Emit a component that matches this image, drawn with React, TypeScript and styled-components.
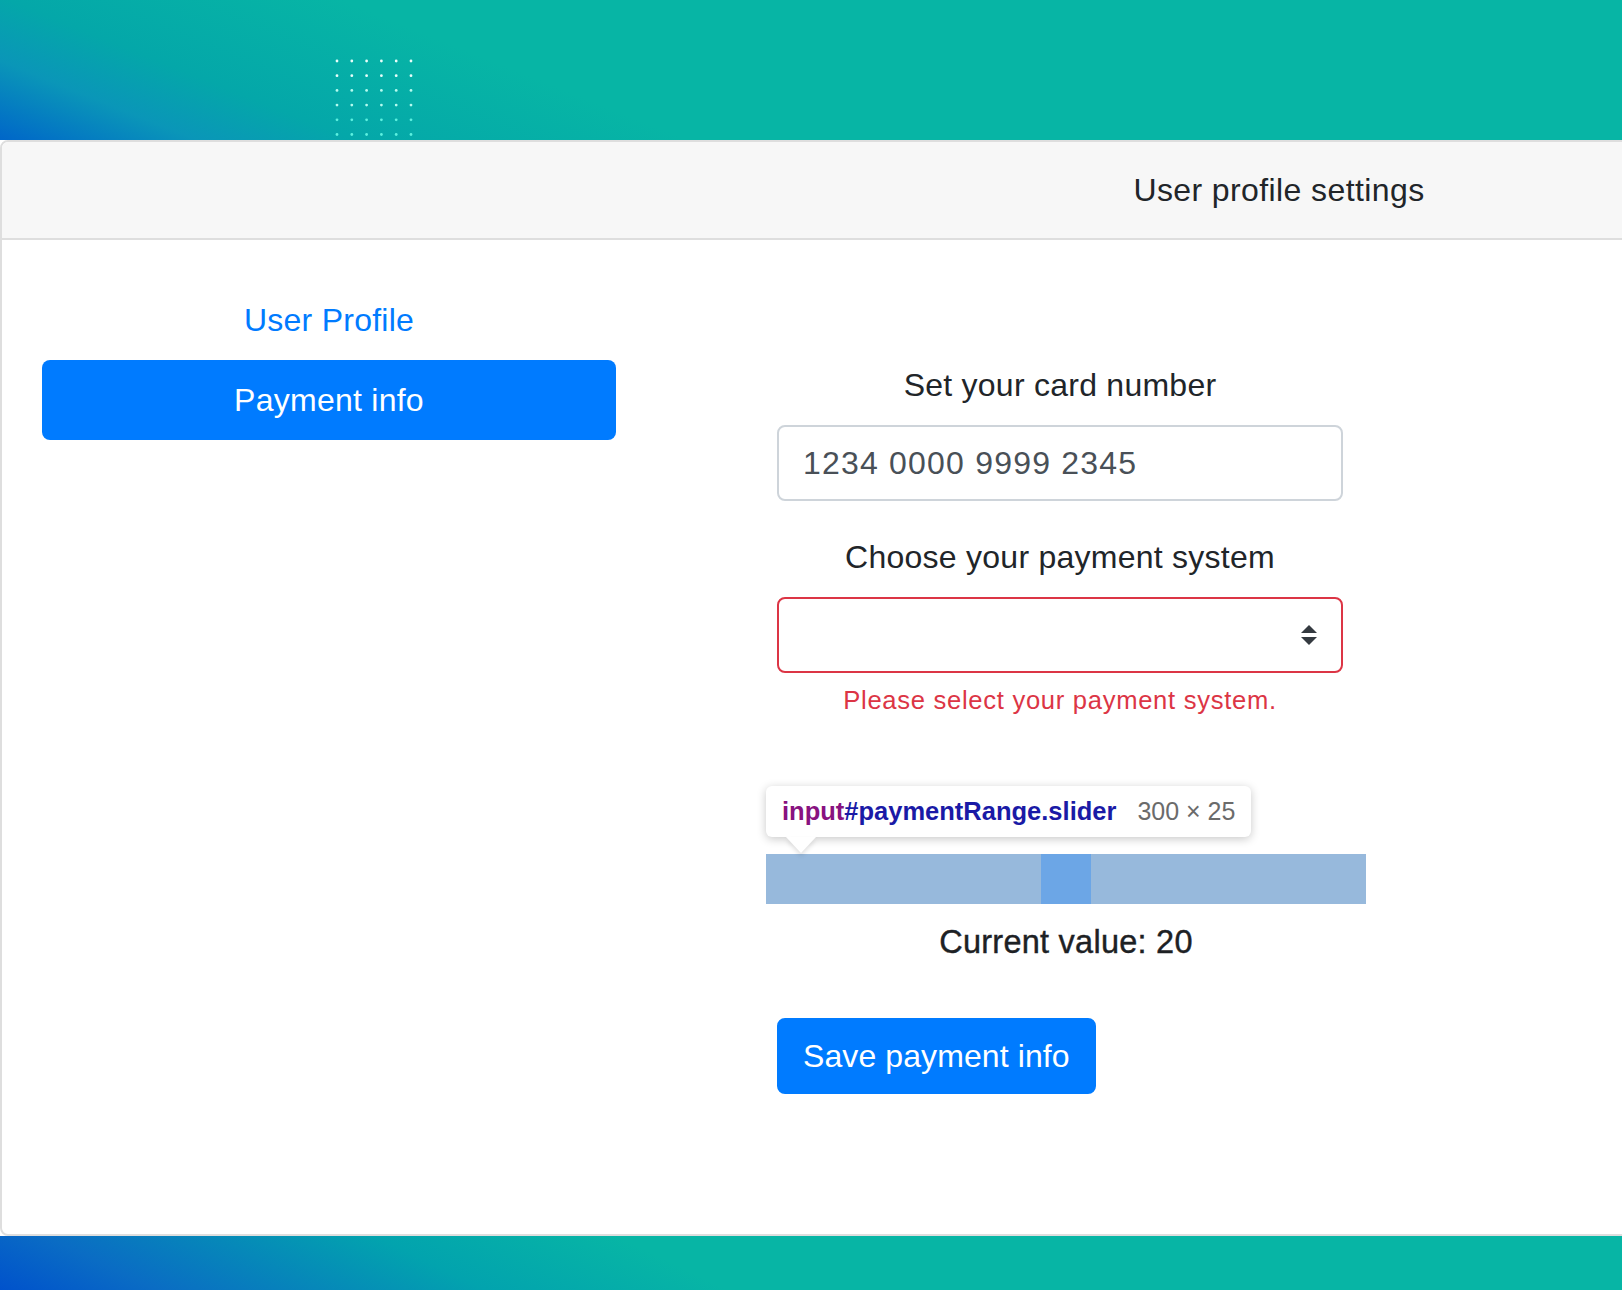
import React from "react";
import styled, { createGlobalStyle } from "styled-components";

const GlobalStyle = createGlobalStyle`
  html, body {
    margin: 0;
    padding: 0;
    overflow: hidden;
    background: #ffffff;
  }
  body {
    font-family: "Liberation Sans", Arial, sans-serif;
    color: #212529;
    letter-spacing: 0.25px;
  }
  * { box-sizing: border-box; }
`;

const Page = styled.div`
  width: 1622px;
  height: 1290px;
  display: flex;
  flex-direction: column;
  overflow: hidden;
`;

const TopBand = styled.div`
  height: 140px;
  flex: none;
  padding: 59px 0 0 335px;
  background: linear-gradient(
    22deg,
    #0066c9 0%,
    #0a96b8 10%,
    #04a7a9 18%,
    #07b5a5 35%,
    #07b5a5 100%
  );
  overflow: hidden;
`;

const BottomBand = styled.div`
  flex: 1;
  background: linear-gradient(
    26deg,
    #0052cc 0%,
    #0a6cc4 9%,
    #02a3ae 28%,
    #07b5a5 42%,
    #07b5a5 100%
  );
`;

const Card = styled.div`
  width: 2558px;
  height: 1096px;
  flex: none;
  background: #ffffff;
  border: 2px solid #dedede;
  border-radius: 8px;
  display: flex;
  flex-direction: column;
`;

const CardHeader = styled.div`
  background: #f7f7f7;
  border-bottom: 2px solid #dedede;
  border-radius: 6px 6px 0 0;
  padding: 24px 40px;
  font-size: 32px;
  line-height: 48px;
  text-align: center;
  color: #212529;
  letter-spacing: 0.4px;
`;

const CardBody = styled.div`
  padding: 40px;
  display: grid;
  grid-template-columns: 574px 1fr;
  column-gap: 60px;
  align-items: start;
`;

const Nav = styled.nav`
  display: flex;
  flex-direction: column;
`;

const NavItem = styled.a<{ $active?: boolean }>`
  display: block;
  height: 80px;
  padding: 16px 32px;
  font-size: 32px;
  line-height: 48px;
  text-align: center;
  text-decoration: none;
  border-radius: 8px;
  color: ${(p) => (p.$active ? "#ffffff" : "#007bff")};
  background: ${(p) => (p.$active ? "#007bff" : "transparent")};
`;

const Form = styled.form`
  width: 566px;
  margin-left: 101px;
  padding-top: 81px;
  display: flex;
  flex-direction: column;
  align-items: flex-start;
`;

const Group = styled.div<{ $last?: boolean }>`
  width: 100%;
  margin-bottom: ${(p) => (p.$last ? "0" : "32px")};
  display: flex;
  flex-direction: column;
`;

const Label = styled.label`
  display: block;
  font-size: 32px;
  line-height: 48px;
  text-align: center;
  margin-bottom: 16px;
  color: #212529;
`;

const TextInput = styled.div`
  height: 76px;
  border: 2px solid #ced4da;
  border-radius: 8px;
  padding: 12px 24px;
  font-size: 32px;
  line-height: 48px;
  letter-spacing: 1.2px;
  color: #495057;
  background: #ffffff;
`;

const SelectBox = styled.div<{ $invalid?: boolean }>`
  height: 76px;
  border: 2px solid ${(p) => (p.$invalid ? "#dc3545" : "#ced4da")};
  border-radius: 8px;
  padding: 12px 24px;
  display: flex;
  align-items: center;
  justify-content: flex-end;
  background: #ffffff;
`;

const Feedback = styled.div`
  margin-top: 8px;
  font-size: 25.6px;
  line-height: 38px;
  letter-spacing: 0.7px;
  text-align: center;
  color: #dc3545;
`;

const SliderBlock = styled.div`
  position: relative;
  width: 600px;
  margin-left: -11px;
  margin-top: 135px;
  display: flex;
  flex-direction: column;
`;

const Track = styled.div`
  height: 50px;
  background: #97b9dc;
  display: flex;
`;

const Thumb = styled.div`
  width: 50px;
  height: 50px;
  margin-left: 275px;
  background: #6ca6e6;
`;

const Tooltip = styled.div`
  position: absolute;
  left: 0;
  bottom: calc(100% + 17px);
  height: 51px;
  padding: 0 16px;
  display: flex;
  align-items: center;
  gap: 21px;
  background: #ffffff;
  border-radius: 6px;
  box-shadow: 0 2px 10px rgba(0, 0, 0, 0.22);
  white-space: nowrap;
  letter-spacing: 0;

  &::after {
    content: "";
    position: absolute;
    left: 20px;
    top: 100%;
    border-left: 15px solid transparent;
    border-right: 15px solid transparent;
    border-top: 16px solid #ffffff;
    filter: drop-shadow(0 3px 2px rgba(0, 0, 0, 0.12));
  }
`;

const TipName = styled.span`
  font-size: 25.5px;
  font-weight: 700;
  color: #1a1aa6;
`;

const TipTag = styled.span`
  color: #881280;
`;

const TipSize = styled.span`
  font-size: 25px;
  color: #6b6b6b;
`;

const CurrentValue = styled.p`
  margin: 14px 0 0;
  font-size: 32.5px;
  line-height: 48px;
  text-align: center;
  color: #1d2124;
  -webkit-text-stroke: 0.4px #1d2124;
`;

const SaveButton = styled.button`
  margin-top: 52px;
  height: 76px;
  padding: 12px 24px;
  border: 2px solid #007bff;
  border-radius: 8px;
  background: #007bff;
  color: #ffffff;
  font-family: inherit;
  font-size: 32px;
  line-height: 48px;
  letter-spacing: 0.1px;
  cursor: pointer;
`;

const Dots: React.FC = () => {
  const cols = 6;
  const rows = 6;
  const items: React.ReactNode[] = [];
  for (let r = 0; r < rows; r++) {
    for (let c = 0; c < cols; c++) {
      items.push(
        <circle
          key={`${r}-${c}`}
          cx={2 + c * 14.8}
          cy={2 + r * 14.7}
          r={1.4}
          fill={r < 2 ? "#e9fffb" : r < 4 ? "#b5fbef" : "#5cf0df"}
        />
      );
    }
  }
  return (
    <svg width="80" height="82" viewBox="0 0 80 82">
      {items}
    </svg>
  );
};

const SelectArrows: React.FC = () => (
  <svg width="16" height="20" viewBox="0 0 4 5">
    <path d="M2 0L0 2h4zm0 5L0 3h4z" fill="#343a40" />
  </svg>
);

export default function App() {
  return (
    <>
      <GlobalStyle />
      <Page>
        <TopBand>
          <Dots />
        </TopBand>
        <Card>
          <CardHeader>User profile settings</CardHeader>
          <CardBody>
            <Nav>
              <NavItem href="#profile">User Profile</NavItem>
              <NavItem href="#payment" $active>
                Payment info
              </NavItem>
            </Nav>
            <Form onSubmit={(e) => e.preventDefault()}>
              <Group>
                <Label>Set your card number</Label>
                <TextInput>1234 0000 9999 2345</TextInput>
              </Group>
              <Group $last>
                <Label>Choose your payment system</Label>
                <SelectBox $invalid>
                  <SelectArrows />
                </SelectBox>
                <Feedback>Please select your payment system.</Feedback>
              </Group>
              <SliderBlock>
                <Tooltip>
                  <TipName>
                    <TipTag>input</TipTag>#paymentRange.slider
                  </TipName>
                  <TipSize>300 × 25</TipSize>
                </Tooltip>
                <Track>
                  <Thumb />
                </Track>
                <CurrentValue>Current value: 20</CurrentValue>
              </SliderBlock>
              <SaveButton type="submit">Save payment info</SaveButton>
            </Form>
          </CardBody>
        </Card>
        <BottomBand />
      </Page>
    </>
  );
}
